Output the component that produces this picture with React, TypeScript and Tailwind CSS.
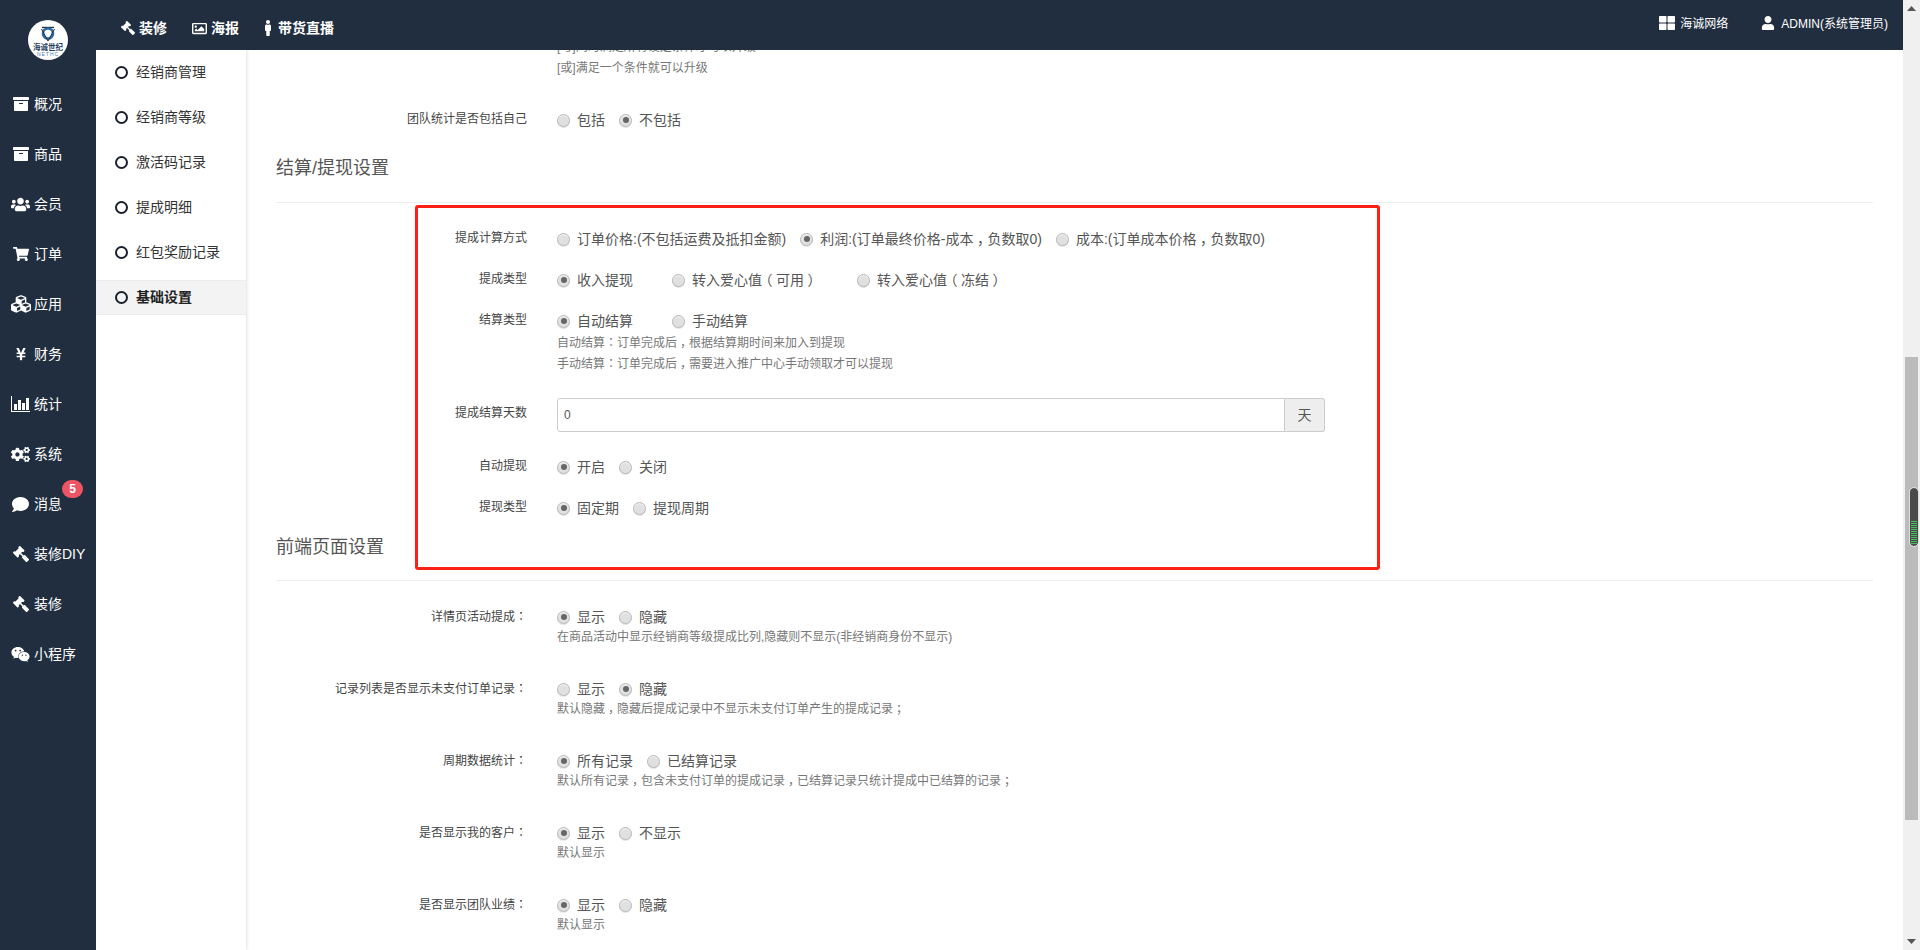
import React from "react";
import { FaGavel, FaRegImage, FaMale, FaThLarge, FaUser, FaArchive, FaUsers, FaShoppingCart, FaCubes, FaYenSign, FaCogs, FaComment, FaWeixin } from "react-icons/fa";

function BarIcon() {
  return (
    <svg width="19" height="16" viewBox="0 0 19 16" fill="#fff">
      <path d="M0 0h1v15h18v1H0z" />
      <rect x="3" y="8" width="3" height="6" />
      <rect x="7" y="4" width="3" height="10" />
      <rect x="11" y="7" width="3" height="7" />
      <rect x="15" y="2" width="3" height="12" />
    </svg>
  );
}

const nav: [React.ReactNode, string][] = [
  [<FaArchive className="text-[16px]" />, "概况"],
  [<FaArchive className="text-[16px]" />, "商品"],
  [<FaUsers className="text-[19px]" />, "会员"],
  [<FaShoppingCart className="text-[16px]" />, "订单"],
  [<FaCubes className="text-[20px]" />, "应用"],
  [<FaYenSign className="text-[14px]" />, "财务"],
  [<BarIcon />, "统计"],
  [<FaCogs className="text-[19px]" />, "系统"],
  [<FaComment className="text-[17px]" />, "消息"],
  [<FaGavel className="text-[16px] -scale-x-100" />, "装修DIY"],
  [<FaGavel className="text-[16px] -scale-x-100" />, "装修"],
  [<FaWeixin className="text-[19px]" />, "小程序"],
];
const sub = ["经销商管理", "经销商等级", "激活码记录", "提成明细", "红包奖励记录", "基础设置"];

function T({ s }: { s: string }) {
  const parts = s.split(/([（）：，；])/);
  return (
    <>
      {parts.map((p, i) => {
        if (p === "：") {
          return <span key={i} className="font-['Noto_Sans_CJK_TC',sans-serif]">{p}</span>;
        }
        if (p === "（") {
          return <span key={i} className="inline-block w-[1em] -ml-[0.25em] mr-[0.25em]">{p}</span>;
        }
        if (p === "）") {
          return <span key={i} className="inline-block w-[1em] ml-[0.25em] -mr-[0.25em]">{p}</span>;
        }
        if (p === "，" || p === "；") {
          return <span key={i} className="inline-block w-[1em] pl-[0.25em] overflow-visible">{p}</span>;
        }
        return <React.Fragment key={i}>{p}</React.Fragment>;
      })}
    </>
  );
}

function Radio({ on, label, cls }: { on?: boolean; label: string; cls: string }) {
  return (
    <span className={`inline-flex items-center ${cls}`}>
      <span className="w-[13px] h-[13px] rounded-full border border-[#b9b9b9] bg-[#e0e0e0] shadow-[inset_0_1px_1px_#f4f4f4,0_1px_0_#e4e4e4] flex items-center justify-center mr-[7px] shrink-0">
        {on && <span className="w-[6px] h-[6px] rounded-full bg-[#666]" />}
      </span>
      <span className="whitespace-nowrap"><T s={label} /></span>
    </span>
  );
}

function Row({ label, opts, help, mt }: { label: string; opts: [string, boolean, string][]; help?: string[]; mt: string }) {
  return (
    <div className={`flex ${mt}`}>
      <div className="w-[251px] h-[20px] text-right text-[12px] leading-[20px] text-[#444] whitespace-nowrap"><T s={label} /></div>
      <div className="pl-[30px]">
        <div className="flex items-center h-[20px] text-[14px] text-[#555] mt-[1px]">
          {opts.map(([l, on, c]) => <Radio key={l} label={l} on={on} cls={c} />)}
        </div>
        {help?.map((h) => <div key={h} className="h-[21px] text-[12px] leading-[21px] text-[#777] whitespace-nowrap"><T s={h} /></div>)}
      </div>
    </div>
  );
}

export default function App() {
  return (
    <div className="flex w-[1920px] h-[950px] overflow-hidden bg-white text-[14px] font-['Liberation_Sans','Noto_Sans_CJK_SC',sans-serif]">
      <div className="w-[1903px] h-full flex flex-col">
        <header className="h-[50px] bg-[#212e3f] flex shrink-0 text-white z-10 relative">
          <div className="w-[96px]" />
          <div className="flex items-center font-bold text-[14px] pl-[25px] gap-[25px] mt-[6px]">
            <span className="flex items-center gap-[4px]"><FaGavel className="text-[14px] -scale-x-100" />装修</span>
            <span className="flex items-center gap-[4px]"><FaRegImage className="text-[15px]" />海报</span>
            <span className="flex items-center gap-[6px]"><FaMale className="w-[8px] h-[16px]" />带货直播</span>
          </div>
          <div className="ml-auto flex items-center text-[12px] pr-[15px] -mt-[2px]">
            <span className="flex items-center gap-[5px]"><FaThLarge className="text-[16px] -mt-[3px]" />海诚网络</span>
            <span className="flex items-center gap-[6px] ml-[33px]"><FaUser className="text-[14px] -mt-[3px]" />ADMIN(系统管理员)</span>
          </div>
        </header>
        <div className="flex flex-1 min-h-0">
          <aside className="w-[96px] bg-[#212e3f] text-white shrink-0 -mt-[50px] z-20 relative">
            <div className="h-[80px] flex items-center justify-center">
              <svg width="40" height="40" viewBox="0 0 40 40">
                <circle cx="20" cy="20" r="20" fill="#fff" />
                <path d="M14 7.5h12" stroke="#1f2f45" strokeWidth="1.4" />
                <circle cx="20" cy="13.5" r="5" fill="none" stroke="#2a6aa8" strokeWidth="2.6" />
                <path d="M13.5 9 L20 21 L26.5 9" fill="none" stroke="#1f2f45" strokeWidth="1" />
                <text x="20" y="29.5" textAnchor="middle" fontSize="7.5" fontWeight="700" fill="#27405f">海诚世纪</text>
                <text x="20" y="35.5" textAnchor="middle" fontSize="5" letterSpacing="1" fill="#4a7db5">NETHC</text>
              </svg>
            </div>
            {nav.map(([icon, t]) => (
              <div key={t} className="h-[50px] flex items-center relative pb-[2px]">
                <span className="w-[34px] flex justify-center pl-[7px]">{icon}</span>
                <span className="text-[14px] whitespace-nowrap">{t}</span>
                {t === "消息" && <span className="absolute left-[62px] top-0 w-[21px] h-[18px] rounded-full bg-[#ed5565] text-[12px] font-bold flex items-center justify-center">5</span>}
              </div>
            ))}
          </aside>
          <nav className="w-[150px] shrink-0 shadow-[1px_0_3px_rgba(0,0,0,0.12)] text-[#333] pt-[5px] z-[1]">
            {sub.map((s, i) => {
              const last = i === sub.length - 1;
              return (
                <div key={s} className={`h-[35px] flex items-center pl-[19px] mb-[10px] ${last ? "bg-[#f3f3f3] border-y border-[#ececec] font-bold text-[#222]" : ""}`}>
                  <span className="w-[13px] h-[13px] rounded-full border-2 border-[#17202c] mr-[8px]" />
                  <span className="whitespace-nowrap">{s}</span>
                </div>
              );
            })}
          </nav>
          <main className="flex-1 min-w-0 overflow-hidden relative pl-[30px] pr-[30px]">
            <div className="-mt-[13px]">
              <div className="pl-[281px] text-[12px] leading-[21px] text-[#777] whitespace-nowrap">
                <div>[与]同时满足所有设定条件才可以升级</div>
                <div>[或]满足一个条件就可以升级</div>
              </div>
              <Row mt="mt-[30px]" label="团队统计是否包括自己" opts={[["包括", false, "mr-[14px]"], ["不包括", true, ""]]} />
              <h3 className="mt-[25px] text-[18px] leading-[26px] text-[#555] font-normal">结算/提现设置</h3>
              <div className="h-px bg-[#eeeeee] mt-[21px]" />
              <Row mt="mt-[25px]" label="提成计算方式" opts={[["订单价格:(不包括运费及抵扣金额)", false, "mr-[14px]"], ["利润:(订单最终价格-成本，负数取0)", true, "mr-[14px]"], ["成本:(订单成本价格，负数取0)", false, ""]]} />
              <Row mt="mt-[20px]" label="提成类型" opts={[["收入提现", true, "mr-[39px]"], ["转入爱心值（可用）", false, "mr-[39px]"], ["转入爱心值（冻结）", false, ""]]} />
              <Row mt="mt-[20px]" label="结算类型" opts={[["自动结算", true, "mr-[39px]"], ["手动结算", false, ""]]} help={["自动结算：订单完成后，根据结算期时间来加入到提现", "手动结算：订单完成后，需要进入推广中心手动领取才可以提现"]} />
              <div className="flex mt-[25px]">
                <div className="w-[251px] text-right text-[12px] leading-[30px] text-[#444]">提成结算天数</div>
                <div className="pl-[30px] flex">
                  <div className="w-[728px] h-[34px] border border-[#ccc] rounded-l-[3px] text-[12px] text-[#555] leading-[32px] pl-[6px]">0</div>
                  <div className="w-[40px] h-[34px] border border-l-0 border-[#ccc] bg-[#eee] rounded-r-[3px] text-[#555] text-[14px] flex items-center justify-center">天</div>
                </div>
              </div>
              <Row mt="mt-[24px]" label="自动提现" opts={[["开启", true, "mr-[14px]"], ["关闭", false, ""]]} />
              <Row mt="mt-[20px]" label="提现类型" opts={[["固定期", true, "mr-[14px]"], ["提现周期", false, ""]]} />
              <h3 className="mt-[16px] text-[18px] leading-[26px] text-[#555] font-normal">前端页面设置</h3>
              <div className="h-px bg-[#eeeeee] mt-[20px]" />
              <Row mt="mt-[25px]" label="详情页活动提成：" opts={[["显示", true, "mr-[14px]"], ["隐藏", false, ""]]} help={["在商品活动中显示经销商等级提成比列,隐藏则不显示(非经销商身份不显示)"]} />
              <Row mt="mt-[30px]" label="记录列表是否显示未支付订单记录：" opts={[["显示", false, "mr-[14px]"], ["隐藏", true, ""]]} help={["默认隐藏，隐藏后提成记录中不显示未支付订单产生的提成记录；"]} />
              <Row mt="mt-[30px]" label="周期数据统计：" opts={[["所有记录", true, "mr-[14px]"], ["已结算记录", false, ""]]} help={["默认所有记录，包含未支付订单的提成记录，已结算记录只统计提成中已结算的记录；"]} />
              <Row mt="mt-[30px]" label="是否显示我的客户：" opts={[["显示", true, "mr-[14px]"], ["不显示", false, ""]]} help={["默认显示"]} />
              <Row mt="mt-[30px]" label="是否显示团队业绩：" opts={[["显示", true, "mr-[14px]"], ["隐藏", false, ""]]} help={["默认显示"]} />
            </div>
            <div className="absolute left-[169px] top-[155px] w-[965px] h-[365px] border-[3px] border-[#ff2015] rounded-[3px] pointer-events-none" />
          </main>
        </div>
      </div>
      <div className="w-[17px] h-full bg-[#f0f0f0] flex flex-col items-center relative">
        <div className="h-[17px] flex items-center justify-center"><svg width="9" height="5" viewBox="0 0 9 5"><path d="M4.5 0 L9 5 L0 5 Z" fill="#555" /></svg></div>
        <div className="w-[13px] h-[463px] bg-[#bbbbbb] mt-[340px]" />
        <div className="h-[17px] mt-auto flex items-center justify-center"><svg width="9" height="5" viewBox="0 0 9 5"><path d="M4.5 5 L9 0 L0 0 Z" fill="#555" /></svg></div>
        <div className="absolute right-[2px] top-[488px] w-[8px] h-[58px] rounded-[4px] bg-[#4a4a4a] outline outline-[#ddd] flex flex-col justify-end items-center gap-[1px] pb-[2px]">
          {Array.from({ length: 12 }).map((_, i) => <span key={i} className="block w-[6px] h-px bg-[#3fc35f]" />)}
        </div>
      </div>
    </div>
  );
}
